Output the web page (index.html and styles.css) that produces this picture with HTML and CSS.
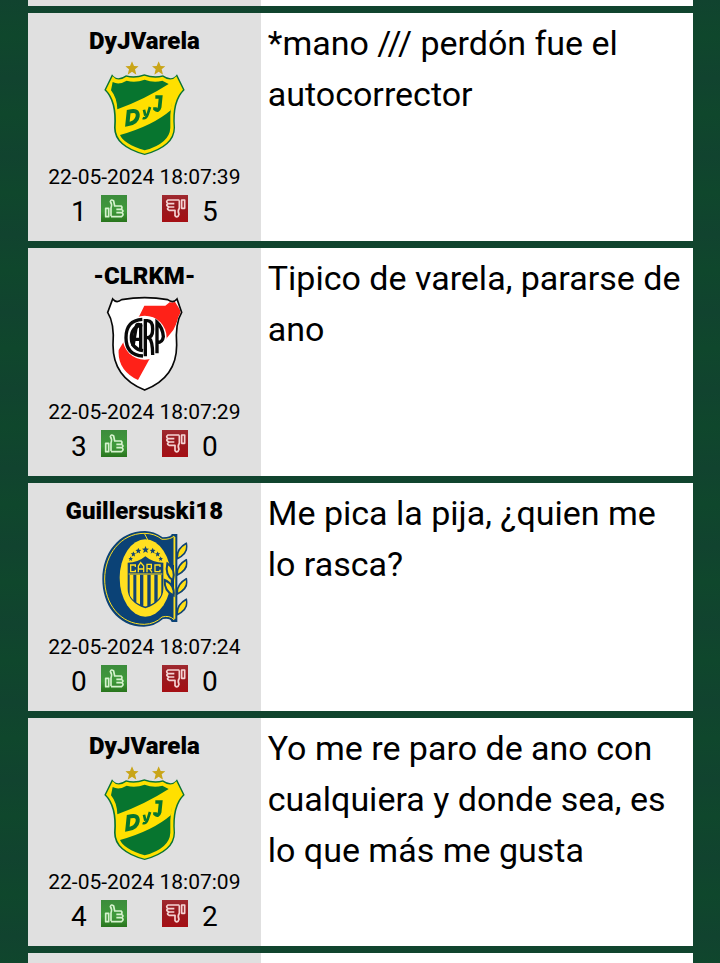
FILE: index.html
```
<!DOCTYPE html>
<html lang="es">
<head>
<meta charset="utf-8">
<meta name="viewport" content="width=device-width, initial-scale=1">
<title>Comentarios</title>
<link rel="stylesheet" href="styles.css">
</head>
<body>
<svg class="defs" aria-hidden="true">
  <defs>
    <linearGradient id="green" x1="0" y1="0" x2="0" y2="1"><stop offset="0" stop-color="#3c8c3c"/><stop offset=".6" stop-color="#3f9a3a"/><stop offset="1" stop-color="#28741c"/></linearGradient>
    <linearGradient id="red" x1="0" y1="0" x2="0" y2="1"><stop offset="0" stop-color="#a02a30"/><stop offset=".4" stop-color="#981a20"/><stop offset="1" stop-color="#a50f14"/></linearGradient>
    <clipPath id="river-clip"><path d="M53 30 Q64 44 80 32 Q149 20 218 32 Q234 44 246 30 L257 67 Q237 100 242 165 Q242 260 149 296 Q57 260 57 165 Q62 100 42 67Z"/></clipPath>
    <clipPath id="shield-clip"><path d="M101 114 Q130 116 151 99 Q172 116 201 114 V195 Q201 228 151 245 Q101 228 101 195Z"/></clipPath>
    <symbol id="star" viewBox="0 0 20 20"><path d="M10 0 L13 7 L20 7.500 L14.500 12 L16.500 20 L10 15.500 L3.500 20 L5.500 12 L0 7.500 L7 7Z"/></symbol>
    <symbol id="defensa" viewBox="-3 0 300 315">
      <g fill="#c9a518"><use href="#star" x="91" y="19" width="40" height="40"/><use href="#star" x="171" y="19" width="40" height="40"/></g>
      <path d="M51 58 Q66 80 93 61 Q120 68 148 58 Q177 68 204 61 Q231 80 246 58 L269 105 Q234 138 240 218 Q240 275 149 300 Q57 275 57 218 Q63 138 28 105Z" fill="#0b7434"/>
      <path d="M53 64 Q68 83 94 65 Q120 72 148 62 Q177 72 203 65 Q229 83 244 64 L264 104 Q229 138 236 218 Q235 272 149 296 Q62 272 62 218 Q68 138 33 104Z" fill="#ffe000"/>
      <path d="M53 81 Q72 91 95 77 Q121 84 149 74 Q176 84 202 77 L221 87 Q151 132 67 163 Q66 128 48 106Z" fill="#07752f"/>
      <path d="M230 140 Q228 152 228 165 Q174 212 75 240 Q86 267 149 286 Q224 265 226 218 Q224 180 230 140Z" fill="#07752f"/>
      <g fill="none" stroke="#07752f">
        <path d="M101 170 L97 208 Q125 204 128 184 Q131 162 101 170Z" stroke-width="12"/>
        <path d="M147 164 L151 182 M165 156 L158 178 Q153 193 143 189" stroke-width="8"/>
        <path d="M181 126 H197 L194 156 Q190 171 180 162 V157" stroke-width="11"/>
      </g>
    </symbol>
    <symbol id="river" viewBox="-3 0 300 315">
      <path d="M53 27 Q64 41 80 29 Q149 17 218 29 Q234 41 246 27 L260 67 Q240 100 245 165 Q245 263 149 300 Q54 263 54 165 Q59 100 38 67Z" fill="#fff"/>
      <g clip-path="url(#river-clip)"><path d="M148 47 H211 L235 28 L260 67 L235 120 L162 210 L129 270 Q67 240 71 180 L134 76Z" fill="#ff2118"/></g>
      <path d="M53 27 Q64 41 80 29 Q149 17 218 29 Q234 41 246 27 L260 67 Q240 100 245 165 Q245 263 149 300 Q54 263 54 165 Q59 100 38 67Z" fill="none" stroke="#080808" stroke-width="5"/>
      <circle cx="149" cy="143" r="66" fill="#fff"/>
      <g fill="none" stroke="#080808" stroke-width="10">
        <path d="M142 88 Q93 91 93 143 Q93 195 144 198 M142 104 Q109 111 109 143 Q109 176 144 182"/>
        <path d="M114 169 L124 108 Q125 103 130 103 Q136 103 137 111 V182 M120 148 H137"/>
        <path d="M151 199 V92 H157 Q173 92 173 117 Q173 143 157 143 H151 M161 143 Q173 151 173 195"/>
        <path d="M186 190 V97 Q203 113 205 140 Q203 158 186 158"/>
      </g>
    </symbol>
    <symbol id="leaf" viewBox="0 0 34 52"><path d="M3 49 Q0 20 30 3 Q38 32 3 49Z" fill="#ffdf16" stroke="#124474" stroke-width="5"/></symbol>
    <symbol id="central" viewBox="-3 0 300 315">
      <path d="M150 18 Q176 18 203 37 Q231 36 230 27 H247 V291 H230 Q226 278 204 282 Q179 304 147 305 C65 305 22 236 22 162 C22 87 70 18 150 18Z" fill="#0b4276"/>
      <path d="M148 25 Q179 25 201 43 Q227 44 237 33 V120 M237 196 V284 Q224 270 201 276 Q180 297 148 298 C74 298 29 235 29 162 C29 91 76 25 148 25Z" fill="none" stroke="#ffe021" stroke-width="3"/>
      <ellipse cx="151" cy="159" rx="77" ry="116" fill="#ffdf20"/>
      <g fill="#124474"><use href="#star" x="141" y="63" width="21" height="21"/><use href="#star" x="121" y="68" width="18" height="18"/><use href="#star" x="164" y="68" width="18" height="18"/><use href="#star" x="107" y="79" width="16" height="16"/><use href="#star" x="180" y="79" width="16" height="16"/><use href="#star" x="100" y="94" width="14" height="14"/><use href="#star" x="190" y="94" width="14" height="14"/></g>
      <path d="M98 113 Q129 113 151 94 Q173 113 205 113 V192 Q205 231 151 250 Q98 231 98 192Z" fill="#124474"/>
      <g clip-path="url(#shield-clip)" fill="#ffdf20"><path d="M104 149h11v100h-11z M124 149h11v100h-11z M145 149h12v100h-12z M167 149h11v100h-11z M188 149h11v100h-11z"/></g>
      <path d="M101 147 H202" stroke="#ffdf20" stroke-width="3"/>
      <path d="M121 126 V120 H107 V140 H121 V134 M130 142 V123 L137 113 L146 123 V142 M130 132 H146 M156 142 V118 H169 V131 H156 M163 131 L171 142 M195 126 V120 H180 V140 H195 V134" fill="none" stroke="#ffdf20" stroke-width="4"/>
      <path d="M239 36 V281" stroke="#ffe021" stroke-width="4"/>
      <use href="#leaf" x="244" y="52" width="34" height="52"/><use href="#leaf" x="244" y="101" width="34" height="52"/><use href="#leaf" x="244" y="158" width="34" height="52"/><use href="#leaf" x="244" y="220" width="34" height="52"/>
      <path d="M217 115 Q243 132 234 166 Q209 151 217 115Z M209 165 Q240 179 236 212 Q207 198 209 165Z" fill="#ffdf16" stroke="#124474" stroke-width="6"/>
    </symbol>
    <symbol id="like" viewBox="0 0 78 81">
      <path fill="url(#green)" d="M0 0h78v81H0z"/>
      <path d="M14 40 H23 V65 H14Z M30 64 V39 Q34 27 28 20 Q30 11 38 18 L41 33 H60 Q66 38 60 43 H46 M60 43 Q71 47 62 53 H46 M62 53 Q71 59 61 65 H30" fill="none" stroke="#d5f2cd" stroke-width="5" stroke-linejoin="round"/>
    </symbol>
    <symbol id="dislike" viewBox="0 0 78 81">
      <path fill="url(#red)" d="M0 0h78v81H0z"/>
      <path d="M59 15 H68 V40 H59Z M52 16 V40 Q46 48 51 58 Q47 71 39 62 V46 H21 Q12 42 21 36 H37 M21 36 Q9 31 18 26 H37 M18 26 Q10 20 18 15 H52" fill="none" stroke="#f5d3d3" stroke-width="5" stroke-linejoin="round"/>
    </symbol>
  </defs>
</svg>
<main class="feed">
  <article class="post post-tail"><div class="author"></div><p class="message"></p></article>
  <article class="post">
    <div class="author">
      <h2 class="name">DyJVarela</h2>
      <svg class="crest" role="img" aria-label="Defensa y Justicia"><use href="#defensa"/></svg>
      <time class="date" datetime="2024-05-22T18:07:39">22-05-2024 18:07:39</time>
      <div class="votes"><span class="count">1</span><button class="vote" aria-label="Me gusta"><svg><use href="#like"/></svg></button><button class="vote vote-down" aria-label="No me gusta"><svg><use href="#dislike"/></svg></button><span class="count">5</span></div>
    </div>
    <p class="message">*mano /// perdón fue el autocorrector</p>
  </article>
  <article class="post">
    <div class="author">
      <h2 class="name">-CLRKM-</h2>
      <svg class="crest" role="img" aria-label="River Plate"><use href="#river"/></svg>
      <time class="date" datetime="2024-05-22T18:07:29">22-05-2024 18:07:29</time>
      <div class="votes"><span class="count">3</span><button class="vote" aria-label="Me gusta"><svg><use href="#like"/></svg></button><button class="vote vote-down" aria-label="No me gusta"><svg><use href="#dislike"/></svg></button><span class="count">0</span></div>
    </div>
    <p class="message">Tipico de varela, pararse de ano</p>
  </article>
  <article class="post">
    <div class="author">
      <h2 class="name">Guillersuski18</h2>
      <svg class="crest" role="img" aria-label="Rosario Central"><use href="#central"/></svg>
      <time class="date" datetime="2024-05-22T18:07:24">22-05-2024 18:07:24</time>
      <div class="votes"><span class="count">0</span><button class="vote" aria-label="Me gusta"><svg><use href="#like"/></svg></button><button class="vote vote-down" aria-label="No me gusta"><svg><use href="#dislike"/></svg></button><span class="count">0</span></div>
    </div>
    <p class="message">Me pica la pija, ¿quien me lo rasca?</p>
  </article>
  <article class="post">
    <div class="author">
      <h2 class="name">DyJVarela</h2>
      <svg class="crest" role="img" aria-label="Defensa y Justicia"><use href="#defensa"/></svg>
      <time class="date" datetime="2024-05-22T18:07:09">22-05-2024 18:07:09</time>
      <div class="votes"><span class="count">4</span><button class="vote" aria-label="Me gusta"><svg><use href="#like"/></svg></button><button class="vote vote-down" aria-label="No me gusta"><svg><use href="#dislike"/></svg></button><span class="count">2</span></div>
    </div>
    <p class="message">Yo me re paro de ano con cualquiera y donde sea, es lo que más me gusta</p>
  </article>
  <article class="post post-tail post-next"><div class="author"></div><p class="message"></p></article>
</main>
</body>
</html>
```
FILE: styles.css
```
* { box-sizing: border-box; }
body {
  margin: 0;
  background: #11452f repeating-linear-gradient(#11432f 0, #0f472c 36px, #11432f 78px);
  color: #000;
  font-family: Roboto, "Liberation Sans", sans-serif;
}
.defs { position: absolute; width: 0; height: 0; }
.feed {
  display: flex;
  flex-direction: column;
  gap: 7px;
  padding: 0 27px 0 28px;
}
.post {
  display: grid;
  grid-template-columns: 35% 1fr;
  background: #fff;
}
.post-tail { height: 6px; }
.post-next { height: 10px; }
.author {
  display: flex;
  flex-direction: column;
  align-items: center;
  background: #e0e0e0;
}
.post:not(.post-tail) .author { padding: 12px 0 15px; }
.name { margin: 0; font-size: 24px; line-height: 32px; font-weight: 900; }
.crest { display: block; width: 100px; height: 105px; margin-top: -2px; }
.date { font-size: 21px; line-height: 35px; }
.votes { display: flex; align-items: flex-start; gap: 14px; height: 31px; }
.count { width: 16px; font-size: 28px; line-height: 34px; text-align: center; }
.vote { width: 26px; height: 27px; padding: 0; border: 0; background: none; }
.vote svg { display: block; width: 26px; height: 27px; }
.vote-down { margin-left: 21px; }
.message {
  margin: 0;
  padding: 5px 7px 0;
  font-size: 34px;
  line-height: 51px;
}
.post-tail .message { padding: 0; }
```
